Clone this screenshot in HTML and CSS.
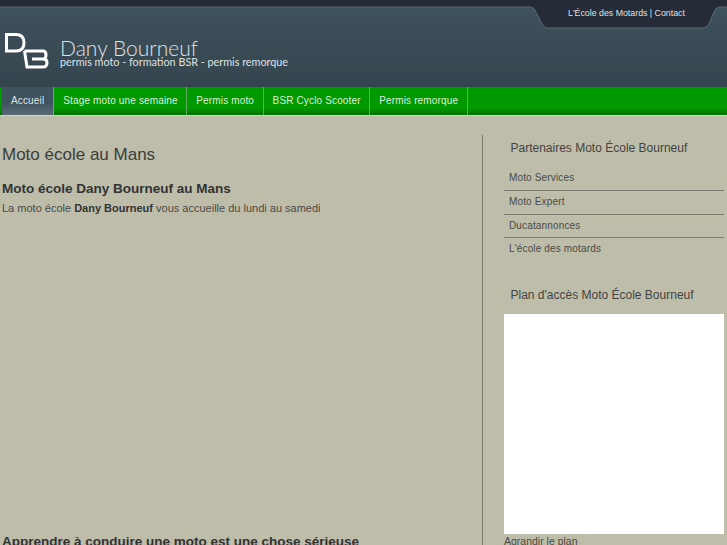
FILE: index.html
```html
<!DOCTYPE html>
<html lang="fr">
<head>
<meta charset="utf-8">
<title>Moto école au Mans</title>
<link rel="stylesheet" href="styles.css">
</head>
<body>
<header class="header">
  <svg class="top-shape" width="727" height="29" viewBox="0 0 727 29">
    <path d="M0 0H727V7H720Q716 7 714 12L709 24Q707 28 703 28H547Q544 28 542 24L536 12Q534 7 530 7H0Z" fill="#252c38"/>
    <path d="M0 7H530Q534 7 536 12L542 24Q544 28 547 28H703Q707 28 709 24L714 12Q716 7 720 7H727" fill="none" stroke="#566b78" stroke-width="1"/>
  </svg>
  <div class="top-links">L'École des Motards | Contact</div>
  <div class="brand">
    <svg class="logo" width="44" height="38" viewBox="0 0 44 38">
      <path d="M1.500 2.500H11Q19 2.500 19 10.500Q19 19 11 19H1.500Z" fill="none" stroke="#fff" stroke-width="3"/>
      <path d="M19.500 19H38Q41 19 41 23Q41 27 38 27H27M38 27Q42 27 42 30.500Q42 35 38 35H22L19.500 19" fill="none" stroke="#fff" stroke-width="3"/>
    </svg>
    <div class="brand-text">
      <div class="brand-name">Dany Bourneuf</div>
      <div class="brand-sub">permis moto - formation BSR - permis remorque</div>
    </div>
  </div>
</header>
<nav class="nav">
  <a class="nav-item active">Accueil</a>
  <a class="nav-item">Stage moto une semaine</a>
  <a class="nav-item">Permis moto</a>
  <a class="nav-item">BSR Cyclo Scooter</a>
  <a class="nav-item">Permis remorque</a>
</nav>
<div class="layout">
  <main class="main">
    <h1 class="title">Moto école au Mans</h1>
    <h2 class="subtitle">Moto école Dany Bourneuf au Mans</h2>
    <p class="intro">La moto école <strong>Dany Bourneuf</strong> vous accueille du lundi au samedi</p>
    <div class="embed"></div>
    <h2 class="subtitle">Apprendre à conduire une moto est une chose sérieuse</h2>
  </main>
  <aside class="side">
    <h3 class="side-title">Partenaires Moto École Bourneuf</h3>
    <ul class="links">
      <li>Moto Services</li>
      <li>Moto Expert</li>
      <li>Ducatannonces</li>
      <li>L'école des motards</li>
    </ul>
    <h3 class="side-title map-title">Plan d'accès Moto École Bourneuf</h3>
    <div class="map"></div>
    <div class="map-link">Agrandir le plan</div>
  </aside>
</div>
</body>
</html>
```
FILE: styles.css
```css
html, body {
  margin: 0;
  height: 545px;
  overflow: hidden;
}
body {
  background: #bdbdaa;
  font-family: "Liberation Sans", Arial, sans-serif;
  color: #3c3c3c;
}
.header {
  position: relative;
  height: 87px;
  background:
    repeating-linear-gradient(rgba(0, 0, 0, 0.02) 0 2px, transparent 2px 4px),
    linear-gradient(#40545e, #35454f);
}
.top-shape {
  position: absolute;
  top: 0;
  left: 0;
}
.top-links {
  position: absolute;
  top: 8px;
  left: 568px;
  font-size: 8.800px;
  line-height: 11px;
  color: #dfe2e2;
  white-space: nowrap;
}
.brand {
  display: flex;
  padding: 32px 0 0 5px;
}
.logo {
  display: block;
}
.brand-text {
  margin: 6px 0 0 11px;
  color: #dfe3e4;
}
.brand-name {
  font-family: "Lato", sans-serif;
  font-weight: 300;
  font-size: 21px;
  line-height: 19px;
}
.brand-sub {
  font-family: "Lato", sans-serif;
  font-size: 10.800px;
  line-height: 10px;
  white-space: nowrap;
}
.nav {
  display: flex;
  height: 28px;
  padding-left: 2px;
  background: linear-gradient(#009900 0, #009900 21px, #006f00 28px);
  box-shadow: 0 1px 0 #d3d3c4;
}
.nav-item {
  padding: 0 8.500px 0 9px;
  border-right: 1px solid #5cae5c;
  font-size: 10px;
  letter-spacing: 0.15px;
  line-height: 27px;
  color: #dcefdc;
  white-space: nowrap;
}
.nav-item.active {
  padding-right: 9px;
  background: linear-gradient(#3f535e 0, #3f535e 16px, #5a6b76 28px);
  border-right-color: #7c9a86;
  color: #dfe4e4;
}
.layout {
  display: flex;
  padding-top: 20px;
}
.main {
  box-sizing: border-box;
  width: 483px;
  padding: 0 0 0 2px;
  border-right: 1px solid #7b7b70;
}
.title {
  margin: 0;
  padding-top: 10px;
  font-size: 17px;
  font-weight: 400;
  line-height: 19px;
}
.subtitle {
  margin: 17px 0 0;
  font-size: 13.500px;
  font-weight: 700;
  line-height: 15px;
  color: #333;
}
.intro {
  margin: 5px 0 0;
  font-size: 11px;
  line-height: 14px;
  color: #4a4a45;
}
.intro strong {
  color: #333;
}
.embed {
  height: 302px;
}
.side {
  box-sizing: border-box;
  width: 244px;
  padding: 6px 3px 0 21px;
}
.side-title {
  margin: 0;
  padding-left: 6.500px;
  font-size: 12px;
  font-weight: 400;
  line-height: 14px;
  color: #444;
}
.links {
  list-style: none;
  margin: 12px 0 0;
  padding: 0;
}
.links li {
  height: 22.800px;
  padding-left: 5px;
  border-bottom: 1px solid #7b7b70;
  font-size: 10px;
  letter-spacing: 0.15px;
  line-height: 22px;
  color: #4a4a45;
}
.links li:last-child {
  border-bottom: 0;
}
.map-title {
  margin-top: 27px;
}
.map {
  height: 220px;
  margin-top: 12px;
  background: #fff;
}
.map-link {
  font-size: 10.500px;
  line-height: 14px;
  color: #4a4a45;
}
```
